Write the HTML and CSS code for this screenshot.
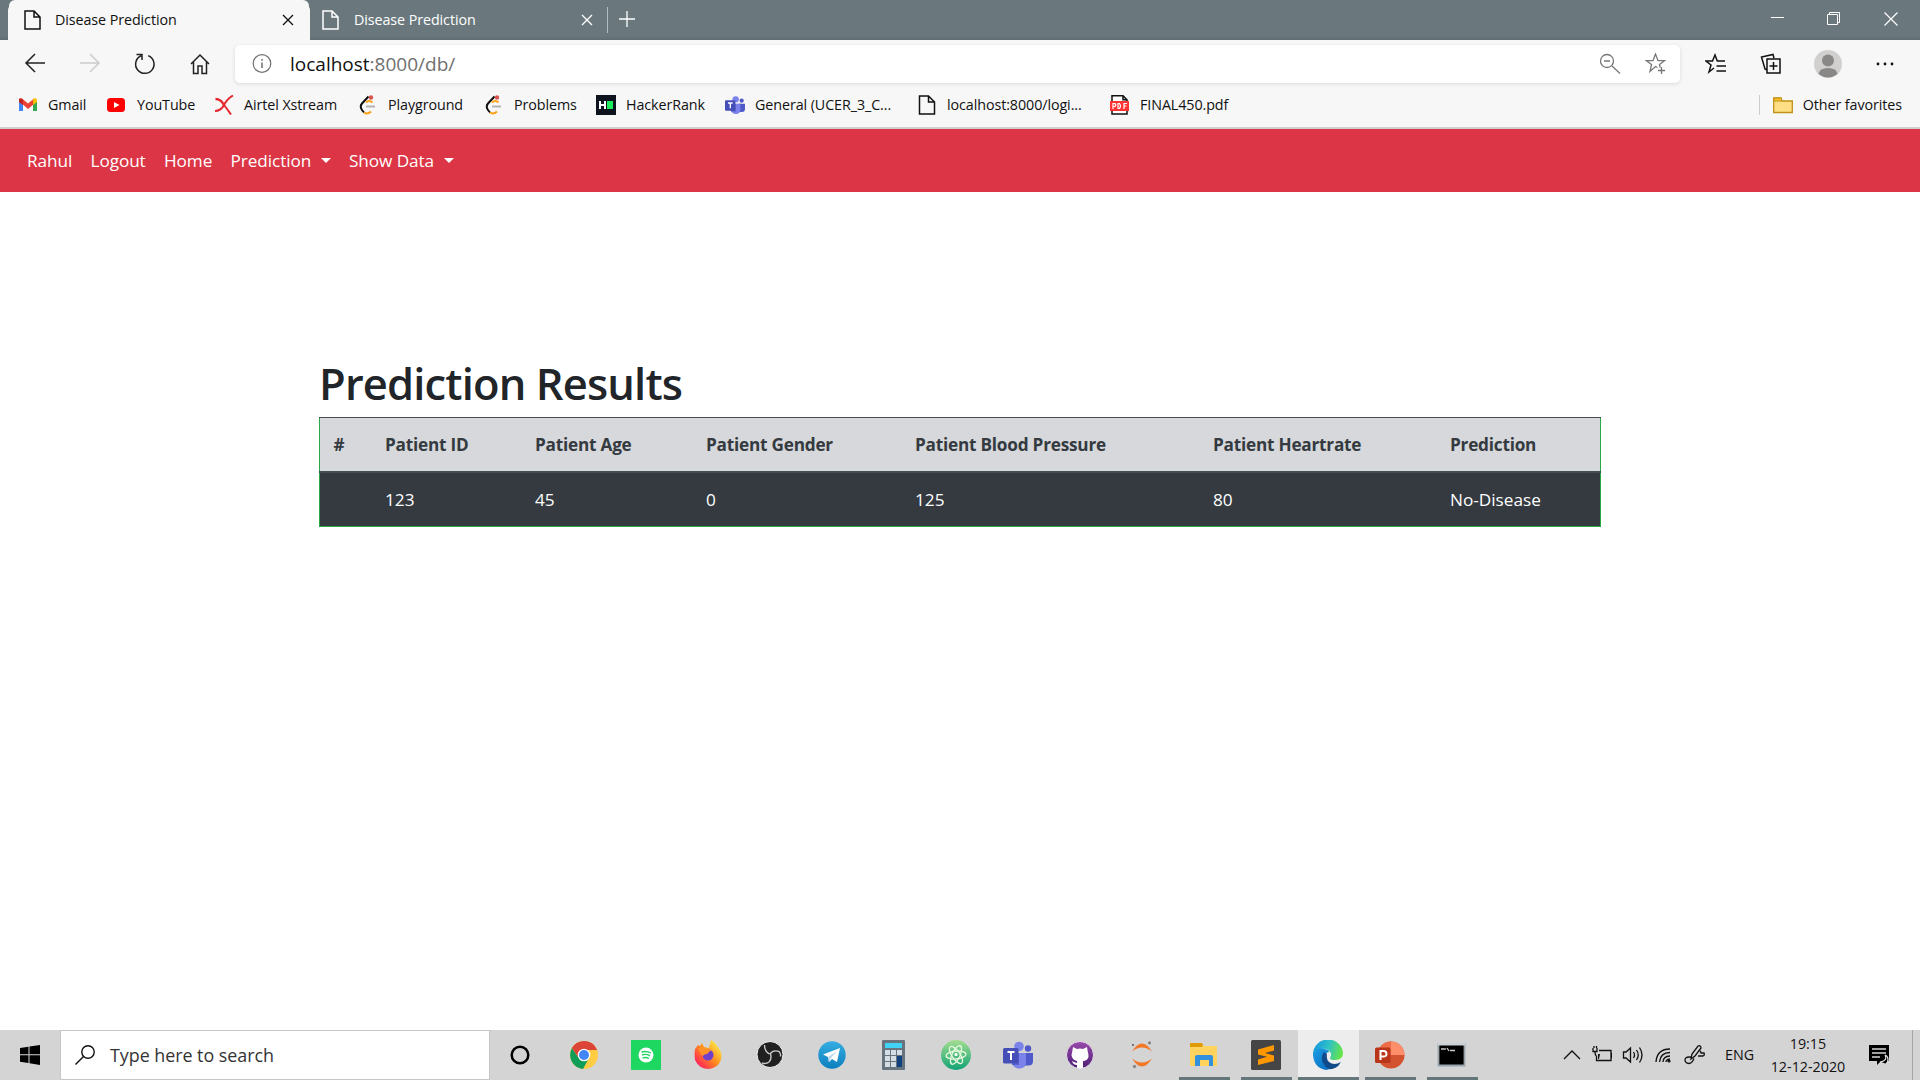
FILE: index.html
```html
<!DOCTYPE html>
<html lang="en">
<head>
<meta charset="utf-8">
<title>Disease Prediction</title>
<link rel="stylesheet" href="styles.css">
</head>
<body>
<svg class="defs" aria-hidden="true">
  <defs>
    <symbol id="page" viewBox="0 0 17 20"><path d="M1 1h9l6 6v12H1zM10 1v6h6" fill="none" stroke="currentColor" stroke-width="1.5"/></symbol>
    <symbol id="cross" viewBox="0 0 12 12"><path d="M1 1l10 10M11 1L1 11" fill="none" stroke="currentColor" stroke-width="1.3"/></symbol>
    <symbol id="leet" viewBox="0 0 20 20"><path d="M10.5 1.500L4 8.500Q1.500 11.500 4 15L6 17.500" fill="none" stroke="#111" stroke-width="2"/><path d="M6 17.500Q9.500 20 13 16.500M8 7.500Q11 4.500 14.500 7.500" fill="none" stroke="#ffa116" stroke-width="2"/><path d="M8 11.500h9" stroke="#b3b3b3" stroke-width="2"/><circle cx="13" cy="2.500" r="2.200" fill="#d9534f"/></symbol>
    <symbol id="teams" viewBox="0 0 30 30"><circle cx="25" cy="8.500" r="3.200" fill="#5059c9"/><path d="M19 13h11v8q0 4.500-4.500 4.500H19z" fill="#5059c9"/><circle cx="16" cy="6.500" r="4.800" fill="#7b83eb"/><path d="M9 13h14v9q0 6.500-6.500 6.500T9 22z" fill="#7b83eb"/><path d="M9 13h7v12H9z" fill="#5961cc"/><rect x="0" y="8" width="15.500" height="15.500" rx="1.500" fill="#464eb8"/><path d="M4.500 12h7M8 12v8" stroke="#fff" stroke-width="2"/></symbol>
    <linearGradient id="fire" x1="1" y1="0" x2="0" y2="1"><stop offset=".1" stop-color="#fff04a"/><stop offset=".5" stop-color="#ff8a1e"/><stop offset=".8" stop-color="#ff3650"/><stop offset="1" stop-color="#d0108a"/></linearGradient>
    <linearGradient id="atomg" x1="0" y1="0" x2="0" y2="1"><stop stop-color="#a4dd91"/><stop offset="1" stop-color="#10a374"/></linearGradient>
    <linearGradient id="tele" x1="0" y1="0" x2="0" y2="1"><stop stop-color="#35ade1"/><stop offset="1" stop-color="#0d7fbf"/></linearGradient>
    <linearGradient id="git" x1="0" y1="0" x2="0" y2="1"><stop stop-color="#9a4aac"/><stop offset="1" stop-color="#4d1f75"/></linearGradient>
    <linearGradient id="edgetop" x1="0" y1=".3" x2="1" y2=".5"><stop stop-color="#1595dd"/><stop offset=".5" stop-color="#2fc2c8"/><stop offset="1" stop-color="#67e545"/></linearGradient>
    <linearGradient id="edgelow" x1="0" y1="0" x2="1" y2="1"><stop stop-color="#1a9ce4"/><stop offset="1" stop-color="#0768bd"/></linearGradient>
  </defs>
</svg>

<header class="tabs">
  <div class="tab active"><svg class="page-icon"><use href="#page"/></svg><span>Disease Prediction</span><svg class="x"><use href="#cross"/></svg></div>
  <div class="tab"><svg class="page-icon"><use href="#page"/></svg><span>Disease Prediction</span><svg class="x"><use href="#cross"/></svg></div>
  <div class="newtab"><svg width="16" height="16"><path d="M0 8h16M8 0v16" stroke="#fff" stroke-width="1.300"/></svg></div>
  <div class="window-controls">
    <svg width="14" height="14"><path d="M1 5.500h13" stroke="#fff"/></svg>
    <svg width="14" height="14"><path d="M.5 2.500h10v10H.5zM2.500 2V.5h10v10H11" fill="none" stroke="#fff"/></svg>
    <svg width="14" height="14"><path d="M.5.500l13 13M13.500.5l-13 13" stroke="#fff" stroke-width="1.200"/></svg>
  </div>
</header>

<div class="toolbar">
  <div class="nav-buttons">
    <svg width="22" height="22" fill="none" stroke="#222" stroke-width="1.500"><path d="M21 10H2M11 1l-9 9 9 9"/></svg>
    <svg width="22" height="22" fill="none" stroke="#ccc" stroke-width="1.500"><path d="M1 10h19M11 1l9 9-9 9"/></svg>
    <svg width="22" height="22" fill="none" stroke="#222" stroke-width="1.500"><path d="M14.200 2.600A9.200 9.200 0 1 1 7 2.800M2.500 1.500h5.500V7"/></svg>
    <svg width="22" height="22" fill="none" stroke="#222" stroke-width="1.500"><path d="M2 11l9-9 9 9M4.500 9v11.500H9V13h4v7.500h4.500V9"/></svg>
  </div>
  <div class="address">
    <svg class="info" width="20" height="20" fill="none" stroke="#707070" stroke-width="1.200"><circle cx="10" cy="9.500" r="8.800"/><path d="M10 8.500v5.500M10 5v1.700" stroke-width="1.500"/></svg>
    <span class="url">localhost<i>:8000/db/</i></span>
    <svg class="zoomout" width="22" height="22" fill="none" stroke="#777" stroke-width="1.300"><circle cx="8" cy="8" r="6.500"/><path d="M5 8h6M13 13l8 7.500"/></svg>
    <svg width="22" height="22" fill="none" stroke="#777" stroke-width="1.300"><path d="M12.500 14.500l-2-1-5.500 5 1.500-7-5-3.800h6.500L10.500 1l2.500 6.700h6.500l-5 3.800.7 3M16.500 14v7M13 17.500h7"/></svg>
  </div>
  <div class="tools">
    <svg width="22" height="22" fill="none" stroke="#111" stroke-width="1.500"><path d="M9 15l-5 4 2-7-5-4h6.500L10 2l2.300 6H20M11.500 13H21M11.500 18H21"/></svg>
    <svg width="22" height="22" fill="none" stroke="#111" stroke-width="1.500"><path d="M7 17l-2-1L1.500 4 13 1.500l1 3.500M7 6h13v14H7zM13.500 9v8M9.500 13h8"/></svg>
    <svg width="28" height="28"><circle cx="14" cy="14" r="14" fill="#d2d0ce"/><circle cx="14" cy="10.500" r="6" fill="#8a8886"/><path d="M4.500 24q1-6 9.500-6t9.500 6Q14 31 4.500 24" fill="#8a8886"/></svg>
    <svg width="22" height="22" fill="#111"><circle cx="4" cy="11" r="1.400"/><circle cx="11" cy="11" r="1.400"/><circle cx="18" cy="11" r="1.400"/></svg>
  </div>
</div>

<nav class="bookmarks">
  <a><svg viewBox="0 0 20 20"><path d="M1 5v11h4V9z" fill="#4285f4"/><path d="M19 5v11h-4V9z" fill="#34a853"/><path d="M1 7V5q0-2.500 3-1.500l6 5 6-5V9l-6 5L5 9.500z" fill="#ea4335"/><path d="M15 4l1-.5q3-1 3 2V7l-4 3z" fill="#fbbc04"/><path d="M1 7V5q0-2.500 4-.5V10z" fill="#c5221f"/></svg>Gmail</a>
  <a><svg viewBox="0 0 20 20"><rect y="3" width="18" height="14" rx="3.500" fill="#f00"/><path d="M7 7l5.500 3L7 13z" fill="#fff"/></svg>YouTube</a>
  <a><svg viewBox="0 0 20 20" fill="none" stroke="#e5252c"><path d="M19 .5Q13 4 10 10q-3 6-9 6M10 10Q14 15 17 19.500" stroke-width="2"/><path d="M1.500 4Q7 4 10 10" stroke-width="2.300"/></svg>Airtel Xstream</a>
  <a><svg><use href="#leet"/></svg>Playground</a>
  <a><svg><use href="#leet"/></svg>Problems</a>
  <a><svg viewBox="0 0 20 20"><path fill="#0e141e" d="M0 0h20v20H0z"/><path d="M4 6v8M9 6v8M4 10h5" stroke="#fff" stroke-width="2"/><path fill="#1fec5d" d="M11 6h6v8h-6z"/></svg>HackerRank</a>
  <a><svg><use href="#teams"/></svg>General (UCER_3_C...</a>
  <a><svg class="file"><use href="#page"/></svg>localhost:8000/logi...</a>
  <a><svg viewBox="0 0 20 20"><path d="M2 .8h11l4 4V19H2zM13 .8v4h4" fill="#fff" stroke="#111" stroke-width="1.500"/><path fill="#f33" d="M0 6h19v10H0z"/><path d="M3 14V8.500h2q1.500 1.500 0 3H3M8 8.500v5h1.500q2-2.500 0-5zM14 14V8.500h3M14 11h2.500" fill="none" stroke="#fff" stroke-width="1.200"/></svg>FINAL450.pdf</a>
  <a class="other"><svg viewBox="0 0 20 20"><path d="M.7 17.500V3H8l1 3h10.300v11.500z" fill="#ffdf85" stroke="#c09216" stroke-width="1.300"/><path d="M1 3h7.500v3H1z" fill="#f4c02c" stroke="#c09216"/></svg>Other favorites</a>
</nav>

<nav class="site-nav"><a>Rahul</a><a>Logout</a><a>Home</a><a class="drop">Prediction</a><a class="drop">Show Data</a></nav>

<main>
  <h1>Prediction Results</h1>
  <table>
    <colgroup><col class="c1"><col class="c2"><col class="c3"><col class="c4"><col class="c5"><col class="c6"><col class="c7"></colgroup>
    <thead><tr><th>#</th><th>Patient ID</th><th>Patient Age</th><th>Patient Gender</th><th>Patient Blood Pressure</th><th>Patient Heartrate</th><th>Prediction</th></tr></thead>
    <tbody><tr><td></td><td>123</td><td>45</td><td>0</td><td>125</td><td>80</td><td>No-Disease</td></tr></tbody>
  </table>
</main>

<footer class="taskbar">
  <div class="start"><svg width="20" height="20"><path d="M0 3l8.500-1.300v7.600H0zM9.500 1.500L20 0v9.300H9.500zM0 10.300h8.500V18L0 16.800zM9.500 10.300H20V20L9.500 18.300z"/></svg></div>
  <div class="search"><svg width="20" height="20" fill="none" stroke="#111" stroke-width="1.400"><circle cx="13" cy="7" r="6.200"/><path d="M8.500 11.500L.5 19.500"/></svg>Type here to search</div>
  <div class="apps">
    <div><svg viewBox="0 0 30 30"><circle cx="15" cy="15" r="8.300" fill="none" stroke="#000" stroke-width="2.500"/></svg></div>
    <div><svg viewBox="0 0 30 30"><circle cx="15" cy="15" r="14" fill="#fc4"/><path d="M15 15L3 8A14 14 0 0 1 28 10H15z" fill="#db4437"/><path d="M3 8A14 14 0 0 0 14 29l6-11-5-3-6 2z" fill="#0f9d58"/><path d="M3 8l6 9 6-7h13A14 14 0 0 0 3 8" fill="#db4437"/><circle cx="15" cy="15" r="6.300" fill="#fff"/><circle cx="15" cy="15" r="5" fill="#4285f4"/></svg></div>
    <div><svg viewBox="0 0 30 30"><path fill="#1ed760" d="M0 0h30v30H0z"/><circle cx="15" cy="15" r="7.500" fill="#fff"/><path d="M10.500 12q5-1.500 9.500 1M11 15q4-1.500 8 .8M11.500 17.800q3.500-1 6.500.7" fill="none" stroke="#1ed760" stroke-width="1.400"/></svg></div>
    <div><svg viewBox="0 0 30 30"><path d="M2 9l3-4 2 1 2-3 2 4 5 1 2-8q4 2 6 6 6 6 4 14-3 8-12 9-10 0-14-9-1-6 0-11" fill="url(#fire)"/><circle cx="15" cy="15" r="5.500" fill="#7040cb"/><path d="M5 8q5-2 8 1l5 1-4 4q-3 0-4 2-3-2-5-8" fill="#ff9226"/></svg></div>
    <div><svg viewBox="0 0 30 30"><circle cx="15" cy="14.500" r="13" fill="#202020" stroke="#f0f0f0"/><path d="M9.500 5q0 6.500 5 9M15 14q3-4.500 9-2.500 2 2 1.500 5M15.500 14q1.500 5-1.500 8-3 2.500-7 1" fill="none" stroke="#c8c8c8" stroke-width="1.400"/></svg></div>
    <div><svg viewBox="0 0 30 30"><circle cx="15" cy="15" r="13.700" fill="url(#tele)"/><path d="M6 14.500L23 8l-3 14-5-3-3 3-1-5z" fill="#fff"/><path d="M11 17l9-6-6 7-2 4z" fill="#b9d8e9"/></svg></div>
    <div><svg viewBox="0 0 30 30"><rect x="3" width="23" height="30" rx="1" fill="#67747d"/><path fill="#40d3f5" d="M6 3h17v5H6z"/><path fill="#d4dce4" d="M6 10h5v5H6zm6 0h5v5h-5zm6 0h5v5h-5zM6 16h5v5H6zm6 0h5v5h-5zM6 22h5v5H6zm6 0h5v5h-5z"/><path fill="#10417f" d="M18 16h5v11h-5z"/></svg></div>
    <div><svg viewBox="0 0 30 30"><circle cx="15" cy="15" r="15" fill="url(#atomg)"/><g fill="none" stroke="#e7f9df" stroke-width="1.300"><ellipse cx="15" cy="15" rx="4" ry="10" transform="rotate(25 15 15)"/><ellipse cx="15" cy="15" rx="4" ry="10" transform="rotate(85 15 15)"/><ellipse cx="15" cy="15" rx="4" ry="10" transform="rotate(145 15 15)"/></g><circle cx="15" cy="14.500" r="1.600" fill="#fff"/></svg></div>
    <div><svg viewBox="0 0 30 30"><use href="#teams"/></svg></div>
    <div><svg viewBox="0 0 30 30"><circle cx="15" cy="15" r="13.500" fill="url(#git)" stroke="#e4dce7"/><path d="M8 7l4 2q3-1 6 0l4-2 .8 5q2 5-1.300 8-1.500 1-3.500 1v7q-3 1-6 0v-3q-4 0-5-4l2 1 3 1v-2q-5-1-5.500-6L7.200 12z" fill="#fff"/></svg></div>
    <div><svg viewBox="0 0 30 30"><path d="M5 11.500q10-16 20 0-10-8-20 0M5 18.500q10 16 20 0-10 8-20 0" fill="#f37726"/><circle cx="22.500" cy="3" r="1.400" fill="#767677"/><circle cx="6" cy="5" r="1" fill="#555"/><circle cx="7.500" cy="26.500" r="1.700" fill="#8a8a8a"/></svg></div>
    <div class="open"><svg viewBox="0 0 30 30"><path d="M1 3h12l2 3h13v20H1z" fill="#ffd35d"/><path d="M1 3h12l1 2-1 2H1z" fill="#df9b05"/><path d="M6 26V17q0-2 2-2h14q2 0 2 2v9h-4v-6h-9v6z" fill="#3291df"/></svg></div>
    <div class="open"><svg viewBox="0 0 30 30"><rect width="30" height="30" rx="1.500" fill="#454545"/><path d="M7 9.500L23 5v5.500l-9 2.600 9 2.400v5.500L7 25v-5.500l9-2.700-9-2.300z" fill="#ff9800"/></svg></div>
    <div class="open current"><svg viewBox="0 0 30 30"><path d="M0 16A15 15 0 0 1 30 13q0 7-8 7-5 0-5-2 3-5-2-8Q7 6 0 16" fill="url(#edgetop)"/><path d="M0 15Q3 7 11 9q5 1 5 3-5 1-4 7 1 7 8 8-3 3-7 3Q1 28 0 15" fill="url(#edgelow)"/><path d="M11 12q-5 7 1 14 4 5 10 2 4-2 6-6-7 4-12 0-3-3-2-8" fill="#114a8b"/></svg></div>
    <div class="open"><svg viewBox="0 0 30 30"><circle cx="16" cy="15" r="13.500" fill="#d35230"/><path d="M16 15V1.500A13.500 13.500 0 0 1 29.500 15z" fill="#ff8f6b"/><path d="M16 15V1.500A13.500 13.500 0 0 0 2.500 15z" fill="#ed6c47"/><rect y="7.500" width="15.500" height="15.500" rx="1.500" fill="#b9361a"/><path d="M5.500 20v-9h3q3 0 3 2.800t-3 2.700h-3" fill="none" stroke="#fff" stroke-width="2"/></svg></div>
    <div class="open"><svg viewBox="0 0 30 30"><path fill="#000" stroke="#98a3ab" stroke-width="1.800" d="M1.500 4h26v21.500h-26z"/><path fill="#cbd2d6" d="M1 3h27v2.500H1z"/><path d="M4 9h3M8 8v2M10 8l2 3M13 10.500h5" stroke="#ccc" stroke-width="1.300"/></svg></div>
  </div>
  <div class="tray">
    <svg width="20" height="20"><path d="M2 14l8-8 8 8"/></svg>
    <svg width="20" height="20"><path d="M7 5.500h12v10H4.500V11M19 8.500h1v4h-1M1 3v3.500h4V3M3 6.500q0 4 1.500 4.500M2 1v2M4.500 1v2"/><path d="M6 9h2l-1 5H6z" fill="#111" stroke="none"/></svg>
    <svg width="22" height="20"><path d="M1.500 7v6H4l4.500 4V3L4 7zM11.500 7q2 3 0 6M14.500 5q3.500 5 0 10M17.500 2.500q5 7.500 0 15"/></svg>
    <svg width="20" height="20"><path d="M2 17Q3 4 16 4M5.500 17Q6.500 7.500 16 7.500M9 17q0-5.500 7-6M12 17q0-2.500 4-3"/><circle cx="15" cy="16" r="1.600" fill="#111" stroke="none"/></svg>
    <svg width="22" height="20"><path d="M7 14l1-5 6-8q3-1 3 2l-6 8zM8 12H5q-4 0-4 3t4 3.500q3 0 5-5M15 5q2 1 2 3l3 0q1 2-1 3h-5"/></svg>
    <span class="lang">ENG</span>
    <div class="clock"><span>19:15</span><span>12-12-2020</span></div>
    <svg class="notify" width="22" height="22"><path d="M1 1h20v16h-8l-4 4v-4H1z" fill="#000" stroke="none"/><path d="M4 5h14M4 9h14M4 13h8" stroke="#d6d6d6"/><path d="M17 11q3 5-4 7 6 5 7-2 0-4-3-5" fill="#000" stroke="#ddd"/></svg>
    <div class="desktop-edge"></div>
  </div>
</footer>
</body>
</html>
```
FILE: styles.css
```css
* { box-sizing: border-box; }
body {
  margin: 0;
  height: 1080px;
  display: flex;
  flex-direction: column;
  overflow: hidden;
  background: #fff;
  color: #111;
  font: 14.3px/20px "Open Sans", "Noto Sans", sans-serif;
}
svg { flex: none; display: block; }
.defs { position: absolute; width: 0; height: 0; }

.tabs {
  height: 40px;
  display: flex;
  padding-left: 9px;
  background: linear-gradient(#6a787d 36px, #5f6d71);
  color: #fff;
}
.tab {
  width: 300px;
  display: flex;
  align-items: center;
  padding: 0 15px;
  letter-spacing: -.08px;
}
.tab + .tab { width: 299px; padding: 0 14px 0 13px; border-right: 1px solid transparent; border-image: linear-gradient(transparent 8px, #b5bcbe 8px, #b5bcbe 32px, transparent 32px) 1; }
.tab span { margin: 0 auto 0 14px; }
.tab + .tab span { margin-left: 15px; }
.active { background: #f7f7f7; color: #111; border-radius: 6px 6px 0 0; box-shadow: -2px 4px 0 -1px #f7f7f7, 2px 4px 0 -1px #f7f7f7; clip-path: inset(0 -3px 0 -3px); }
.page-icon { width: 17px; height: 20px; }
.x { width: 12px; height: 12px; }
.newtab { margin-left: 11px; padding-top: 11px; }
.window-controls { margin-left: auto; display: flex; gap: 43px; padding: 12px 22px 0 0; }

.toolbar { height: 47px; display: flex; background: #f7f7f7; position: relative; }
.nav-buttons { width: 235px; padding: 13px 0 0 24px; display: flex; gap: 33px; }
.address {
  width: 1445px;
  height: 38px;
  margin-top: 5px;
  padding: 0 14px 0 17px;
  display: flex;
  align-items: center;
  background: #fff;
  border-radius: 5px;
  box-shadow: 0 1px 4px rgba(0, 0, 0, .12);
}
.url { margin: 0 auto 0 18px; font-size: 19px; }
.url i { color: #707070; font-style: normal; }
.zoomout { margin-right: 24px; }
.address svg:last-child { margin-right: -1px; }
.tools { display: flex; align-items: center; gap: 32px; padding-left: 25px; }
.tools svg:first-child { margin-right: 1px; }

.bookmarks {
  height: 42px;
  padding: 0 18px 4px;
  display: grid;
  grid-template-columns: 89px 107px 144px 126px 112px 129px 192px 193px 1fr auto;
  align-items: center;
  background: #f7f7f7;
  border-bottom: 2px solid #cdcfd1;
  letter-spacing: -.08px;
}
.bookmarks a { display: flex; align-items: center; gap: 10px; white-space: nowrap; }
.bookmarks svg { width: 20px; height: 20px; }
.bookmarks .other { border-left: 1px solid #ccc; padding-left: 13px; }

.site-nav {
  height: 63px;
  padding: 0 27px;
  display: flex;
  gap: 18.3px;
  align-items: center;
  background: #dc3545;
  color: #fff;
  font-size: 17.2px;
  letter-spacing: -.08px;
}
.drop { display: flex; align-items: center; }
.drop::after { content: ""; margin-left: 9.500px; border: 5.500px solid transparent; border-top-color: #fff; border-bottom: 0; }

main { flex: 1; width: 1282px; margin: 0 auto; padding-top: 165px; }
h1 { margin: 0 0 6px; font-size: 43.500px; line-height: 54px; font-weight: 600; letter-spacing: -.85px; color: #212529; }
table { width: 1281px; table-layout: fixed; border-collapse: collapse; border: 1px solid #28a745; font-size: 17.2px; text-align: left; line-height: 27px; }
.c1 { width: 52px; } .c2 { width: 150px; } .c3 { width: 171px; } .c4 { width: 209px; }
.c5 { width: 298px; } .c6 { width: 237px; } .c7 { width: 164px; }
th, td { padding: 13px 0 13px 13.500px; height: 54px; }
th { background: #d6d8db; color: #343a40; border-top: 1px solid #454d55; border-bottom: 2px solid #454d55; font-weight: 700; letter-spacing: -.22px; }
td { background: #343a40; color: #fff; }

.taskbar { height: 50px; display: flex; background: #d4d4d4; }
.start { width: 60px; padding: 15px 20px; }
.search { width: 430px; display: flex; align-items: center; gap: 15px; padding-left: 14px; background: #fff; border: 1px solid #c6c6c6; font-size: 17.900px; letter-spacing: -.04px; color: #333; }
.apps { display: flex; margin-left: -1px; }
.apps div { width: 62px; height: 50px; display: flex; justify-content: center; align-items: center; }
.apps div:first-child { width: 64px; padding-right: 2px; }
.apps svg { width: 30px; height: 30px; }
.apps .open { background: linear-gradient(#66777b, #66777b) center bottom / 51px 3px no-repeat; }
.apps .current { background: linear-gradient(#66777b, #66777b) center bottom / 61px 3px no-repeat, linear-gradient(90deg, transparent 1px, #ededed 1px); }
.tray { flex: 1; display: flex; align-items: center; padding-left: 79px; }
.tray svg { fill: none; stroke: #111; stroke-width: 1.300; margin-right: 10px; }
.tray .lang { width: 44px; margin-left: 9px; }
.clock { width: 76px; display: flex; flex-direction: column; align-items: center; line-height: 23px; margin: 0 22px 0 1px; }
.tray .notify { margin-right: 22px; }
.desktop-edge { width: 1px; height: 50px; background: #a5a5a5; }
```
